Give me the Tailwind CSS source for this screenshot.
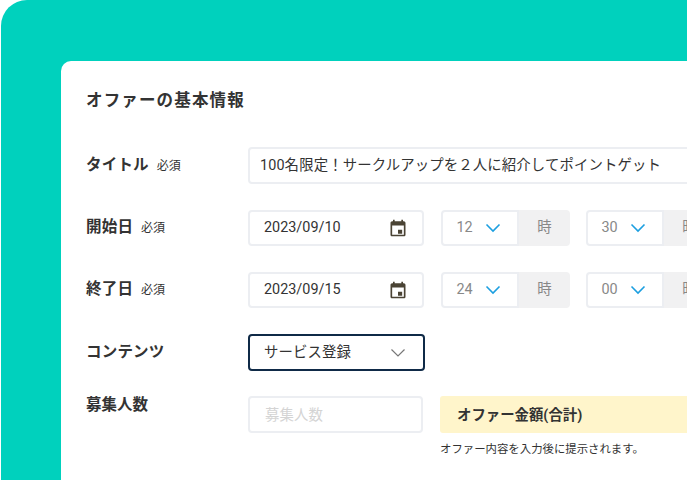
<!DOCTYPE html>
<html lang="ja">
<head>
  <meta charset="UTF-8">
  <title>オファーの基本情報</title>
  <script src="https://cdn.jsdelivr.net/npm/@tailwindcss/browser@4"></script>
</head>
<body class="bg-white overflow-hidden font-['Roboto','Noto_Sans_CJK_JP',sans-serif] text-[#333]">
  <div class="w-[687px] h-[480px] overflow-hidden">
    <div class="ml-px w-[800px] h-[480px] bg-[#00d1bd] rounded-tl-[26px] pt-[61px] pl-[60px]">
      <div class="w-[800px] h-[500px] bg-white rounded-tl-[10px] pl-[25px] pt-[30px]">
        <h2 class="text-[16.500px] leading-[20px] font-bold tracking-[1.150px]">オファーの基本情報</h2>

        <div class="flex items-center mt-[36px] h-[37px]">
          <div class="w-[162px] flex items-center gap-[8px]">
            <span class="text-[15.500px] font-bold tracking-[0.2px]">タイトル</span>
            <span class="text-[12px]">必須</span>
          </div>
          <div class="w-[500px] h-[37px] border-2 border-[#eceef2] rounded-[4px] flex items-center pl-[10px] text-[14.400px] tracking-[0.12px]">100名限定！サークルアップを２人に紹介してポイントゲット</div>
        </div>

        <div class="flex items-center mt-[26px] h-[36px]">
          <div class="w-[162px] flex items-center gap-[8px]">
            <span class="text-[15.500px] font-bold tracking-[0.2px]">開始日</span>
            <span class="text-[12px]">必須</span>
          </div>
          <div class="w-[176px] h-[36px] border-2 border-[#eceef2] rounded-[4px] flex items-center justify-between pl-[14px] pr-[14px] text-[14.400px]">
            <span>2023/09/10</span>
            <svg class="w-[20px] h-[20px]" viewBox="0 0 24 24" fill="#4a4334"><path d="M19 4h-1V2h-2v2H8V2H6v2H5c-1.1 0-2 .9-2 2v14c0 1.1.9 2 2 2h14c1.100 0 2-.9 2-2V6c0-1.100-.9-2-2-2zm0 16H5V9h14v11zm-7-6h5v5h-5z"/></svg>
          </div>
          <div class="ml-[17px] w-[129px] h-[36px] flex">
            <div class="w-[78px] border-2 border-[#eceef2] rounded-l-[4px] flex items-center pl-[13.500px] gap-[12px] text-[14.400px] text-[#888]">
              <span>12</span>
              <svg class="w-[16px] h-[10px]" viewBox="0 0 16 10" fill="none" stroke="#1c9fe0" stroke-width="1.600"><path d="M1.500 1.500 8 8l6.500-6.500"/></svg>
            </div>
            <div class="flex-1 bg-[#f1f1f2] rounded-r-[4px] flex items-center justify-center text-[14.400px] text-[#888]">時</div>
          </div>
          <div class="ml-[16px] w-[129px] h-[36px] flex">
            <div class="w-[78px] border-2 border-[#eceef2] rounded-l-[4px] flex items-center pl-[13.500px] gap-[12px] text-[14.400px] text-[#888]">
              <span>30</span>
              <svg class="w-[16px] h-[10px]" viewBox="0 0 16 10" fill="none" stroke="#1c9fe0" stroke-width="1.600"><path d="M1.500 1.500 8 8l6.500-6.500"/></svg>
            </div>
            <div class="flex-1 bg-[#f1f1f2] rounded-r-[4px] flex items-center justify-center text-[14.400px] text-[#888]">時</div>
          </div>
        </div>

        <div class="flex items-center mt-[26px] h-[36px]">
          <div class="w-[162px] flex items-center gap-[8px]">
            <span class="text-[15.500px] font-bold tracking-[0.2px]">終了日</span>
            <span class="text-[12px]">必須</span>
          </div>
          <div class="w-[176px] h-[36px] border-2 border-[#eceef2] rounded-[4px] flex items-center justify-between pl-[14px] pr-[14px] text-[14.400px]">
            <span>2023/09/15</span>
            <svg class="w-[20px] h-[20px]" viewBox="0 0 24 24" fill="#4a4334"><path d="M19 4h-1V2h-2v2H8V2H6v2H5c-1.1 0-2 .9-2 2v14c0 1.1.9 2 2 2h14c1.100 0 2-.9 2-2V6c0-1.100-.9-2-2-2zm0 16H5V9h14v11zm-7-6h5v5h-5z"/></svg>
          </div>
          <div class="ml-[17px] w-[129px] h-[36px] flex">
            <div class="w-[78px] border-2 border-[#eceef2] rounded-l-[4px] flex items-center pl-[13.500px] gap-[12px] text-[14.400px] text-[#888]">
              <span>24</span>
              <svg class="w-[16px] h-[10px]" viewBox="0 0 16 10" fill="none" stroke="#1c9fe0" stroke-width="1.600"><path d="M1.500 1.500 8 8l6.500-6.500"/></svg>
            </div>
            <div class="flex-1 bg-[#f1f1f2] rounded-r-[4px] flex items-center justify-center text-[14.400px] text-[#888]">時</div>
          </div>
          <div class="ml-[16px] w-[129px] h-[36px] flex">
            <div class="w-[78px] border-2 border-[#eceef2] rounded-l-[4px] flex items-center pl-[13.500px] gap-[12px] text-[14.400px] text-[#888]">
              <span>00</span>
              <svg class="w-[16px] h-[10px]" viewBox="0 0 16 10" fill="none" stroke="#1c9fe0" stroke-width="1.600"><path d="M1.500 1.500 8 8l6.500-6.500"/></svg>
            </div>
            <div class="flex-1 bg-[#f1f1f2] rounded-r-[4px] flex items-center justify-center text-[14.400px] text-[#888]">時</div>
          </div>
        </div>

        <div class="flex items-center mt-[26px] h-[37px]">
          <div class="w-[162px] text-[15.500px] font-bold tracking-[0.2px]">コンテンツ</div>
          <div class="w-[177px] h-[37px] border-2 border-[#0f2a47] rounded-[4px] flex items-center justify-between pl-[14px] pr-[17px] text-[14.400px] tracking-[0.1px]">
            <span>サービス登録</span>
            <svg class="w-[16px] h-[10px]" viewBox="0 0 16 10" fill="none" stroke="#777" stroke-width="1.200"><path d="M1.500 1.500 8 8l6.500-6.500"/></svg>
          </div>
        </div>

        <div class="flex items-start mt-[25px]">
          <div class="w-[162px] text-[15.500px] leading-[18px] font-bold">募集人数</div>
          <div class="w-[175px] h-[37px] border-2 border-[#eceef2] rounded-[4px] flex items-center pl-[15px] pt-[2px] text-[14.400px] tracking-[0.1px] text-[#d4d4d4]">募集人数</div>
          <div class="ml-[17px]">
            <div class="w-[300px] h-[37px] bg-[#fff5cb] rounded-[3px] flex items-center pl-[17px] pt-[3px] text-[14.400px] font-bold">オファー金額(合計)</div>
            <p class="mt-[8px] text-[11.400px] leading-[16px]">オファー内容を入力後に提示されます。</p>
          </div>
        </div>
      </div>
    </div>
  </div>
</body>
</html>
